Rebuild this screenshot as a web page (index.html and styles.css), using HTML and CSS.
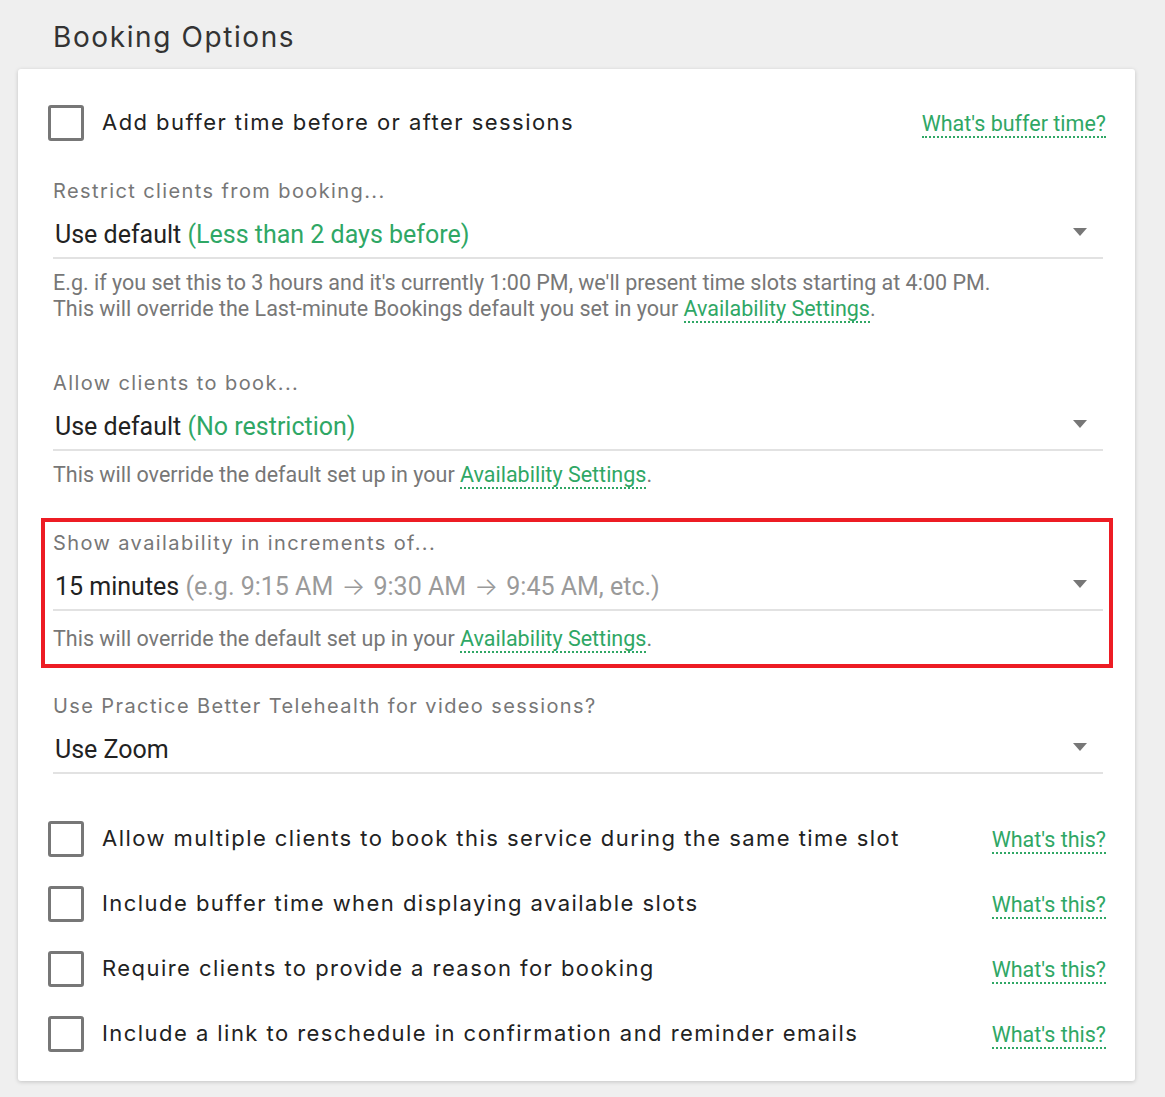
FILE: index.html
```html
<!DOCTYPE html>
<html lang="en">
<head>
<meta charset="utf-8">
<title>Booking Options</title>
<link rel="stylesheet" href="styles.css">
</head>
<body>
<div class="page">
  <h2 class="title">Booking Options</h2>
  <div class="card">
    <div class="check-row first">
      <span class="box"></span>
      <span class="check-label">Add buffer time before or after sessions</span>
      <a class="help-link">What's buffer time?</a>
    </div>

    <div class="fields">
      <div class="field f1">
        <div class="field-label">Restrict clients from booking...</div>
        <div class="select"><span class="val">Use default <span class="green">(Less than 2 days before)</span></span><span class="arrow"></span></div>
        <div class="help">E.g. if you set this to 3 hours and it's currently 1:00 PM, we'll present time slots starting at 4:00 PM.<br>This will override the Last-minute Bookings default you set in your <a class="link">Availability Settings</a>.</div>
      </div>

      <div class="field f2">
        <div class="field-label">Allow clients to book...</div>
        <div class="select"><span class="val">Use default <span class="green">(No restriction)</span></span><span class="arrow"></span></div>
        <div class="help">This will override the default set up in your <a class="link">Availability Settings</a>.</div>
      </div>

      <div class="field f3 highlight">
        <div class="field-label">Show availability in increments of...</div>
        <div class="select"><span class="val">15 minutes <span class="muted">(e.g. 9:15 AM <span class="arr">→</span> 9:30 AM <span class="arr">→</span> 9:45 AM, etc.)</span></span><span class="arrow"></span></div>
        <div class="help">This will override the default set up in your <a class="link">Availability Settings</a>.</div>
      </div>

      <div class="field f4">
        <div class="field-label">Use Practice Better Telehealth for video sessions?</div>
        <div class="select"><span class="val">Use Zoom</span><span class="arrow"></span></div>
      </div>
    </div>

    <div class="checks">
      <div class="check-row">
        <span class="box"></span>
        <span class="check-label">Allow multiple clients to book this service during the same time slot</span>
        <a class="help-link">What's this?</a>
      </div>
      <div class="check-row">
        <span class="box"></span>
        <span class="check-label">Include buffer time when displaying available slots</span>
        <a class="help-link">What's this?</a>
      </div>
      <div class="check-row">
        <span class="box"></span>
        <span class="check-label">Require clients to provide a reason for booking</span>
        <a class="help-link">What's this?</a>
      </div>
      <div class="check-row">
        <span class="box"></span>
        <span class="check-label">Include a link to reschedule in confirmation and reminder emails</span>
        <a class="help-link">What's this?</a>
      </div>
    </div>
  </div>
</div>
</body>
</html>
```
FILE: styles.css
```css
* { box-sizing: border-box; }

body {
  margin: 0;
  background: #efefef;
  font-family: Roboto, "Liberation Sans", sans-serif;
  color: #222;
}

.page {
  padding: 19px 0 0 18px;
  width: 1135px;
  height: 1097px;
}

.title {
  margin: 0 0 14px 35px;
  font-family: Inter, "Open Sans", sans-serif;
  font-weight: 400;
  font-size: 28px;
  line-height: 36px;
  letter-spacing: 1.6px;
  color: #333;
}

.card {
  background: #fff;
  border-radius: 3px;
  box-shadow: 0 1px 4px rgba(0,0,0,0.18);
  padding: 21px 29px 15px 30px;
}

.check-row {
  display: flex;
  align-items: center;
  height: 65px;
}

.box {
  flex: none;
  width: 36px;
  height: 36px;
  border: 3px solid #777;
  border-radius: 3px;
  margin-right: 18px;
}

.check-label {
  flex: 1;
  font-family: Inter, "Open Sans", sans-serif;
  font-size: 22px;
  letter-spacing: 1.45px;
  color: #222;
  margin-top: -1px;
}

.help-link {
  font-size: 21.5px;
  color: #2fa765;
  line-height: 24px;
  border-bottom: 2px dotted #2fa765;
  margin-top: 4px;
}

.fields {
  margin: 23px 3px 0 5px;
}

.field-label {
  font-family: Inter, "Open Sans", sans-serif;
  font-size: 20px;
  line-height: 26px;
  letter-spacing: 1.4px;
  color: #777;
}

.select {
  display: flex;
  align-items: center;
  justify-content: space-between;
  margin-top: 14px;
  line-height: 34px;
  font-size: 25px;
  color: #222;
  padding: 0 16px 5px 2px;
  border-bottom: 2px solid #e2e2e2;
}

.green { color: #2fa765; }
.muted { color: #9a9a9a; }
.arr {
  font-family: Inter, "DejaVu Sans", sans-serif;
  font-weight: 300;
  margin: 0 2px;
}

.arrow {
  width: 0;
  height: 0;
  border-left: 7px solid transparent;
  border-right: 7px solid transparent;
  border-top: 8px solid #777;
  margin-top: -6px;
}

.help {
  margin-top: 11px;
  font-size: 21.5px;
  line-height: 26px;
  color: #777;
}

.link {
  color: #2fa765;
  border-bottom: 2px dotted #2fa765;
}

.f2 { margin-top: 48px; }

.highlight {
  margin: 30px -10px 0 -12px;
  border: 4px solid #ed1c24;
  padding: 8px 6px 12px 8px;
}
.highlight .select { margin-top: 13px; }
.highlight .help { margin-top: 15px; }

.f4 { margin-top: 25px; }

.checks {
  margin-top: 32px;
}
```
